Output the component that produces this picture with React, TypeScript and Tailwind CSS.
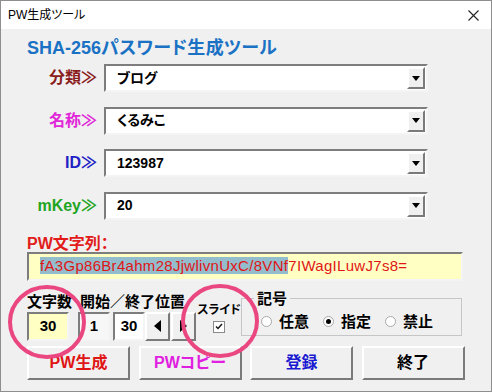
const jp = "font-['Liberation_Sans','Noto_Sans_CJK_JP',sans-serif] [font-feature-settings:'palt']"

const sunken = 'border-2 border-t-[#7d7d7d] border-l-[#7d7d7d] border-b-[#f4f4f4] border-r-[#f4f4f4]'
const raised = 'border-2 border-t-white border-l-white border-b-[#7a7a7a] border-r-[#7a7a7a] bg-[#f0f0f0]'

const rows = [
  { label: '分類≫', color: 'text-[#8a1c1c]', value: 'ブログ' },
  { label: '名称≫', color: 'text-[#e028d8]', value: 'くるみこ' },
  { label: 'ID≫', color: 'text-[#2222c4]', value: '123987' },
  { label: 'mKey≫', color: 'text-[#1fa51f]', value: '20' },
]

function Combo({ value }: { value: string }) {
  return (
    <div className={`flex h-[28px] w-[324px] items-center bg-white ${sunken}`}>
      <span className="flex-1 pl-[11px] text-[14px] font-bold text-black">{value}</span>
      <div className={`mr-[1px] flex h-[22px] w-[18px] items-center justify-center ${raised}`}>
        <svg width="8" height="5" viewBox="0 0 8 5"><path d="M0 0h8L4 5z" fill="#000" /></svg>
      </div>
    </div>
  )
}

function Radio({ label, on }: { label: string; on?: boolean }) {
  return (
    <div className="flex items-center">
      <div className="flex h-[11px] w-[11px] items-center justify-center rounded-full border border-[#a8a8a8] bg-white">
        {on && <div className="h-[5px] w-[5px] rounded-full bg-black" />}
      </div>
      <span className="ml-[7px] text-[15px] font-bold leading-[18px] text-black">{label}</span>
    </div>
  )
}

export default function App() {
  return (
    <div className={`relative flex h-[392px] w-[492px] flex-col border border-[#8e8e8e] bg-[#f0f0f0] ${jp}`}>
      <div className="flex h-[28px] items-center justify-between bg-white pl-[7px] pr-[12px]">
        <span className="text-[12px] text-black">PW生成ツール</span>
        <svg width="11" height="11" viewBox="0 0 11 11"><path d="M0.5 0.5l10 10M10.5 0.5l-10 10" stroke="#222" strokeWidth="1.1" /></svg>
      </div>

      <div className="flex flex-col pl-[26px]">
        <h1 className="mt-[9px] text-[18px] font-bold leading-[20px] text-[#1b72c4]">
          SHA-256<span className="tracking-[0.3px]">パスワード生成ツール</span>
        </h1>

        <div className="mt-[6px] flex flex-col gap-[14.5px]">
          {rows.map((r) => (
            <div key={r.label} className="flex items-center">
              <span className={`mr-[7px] w-[70px] text-right text-[16px] font-bold ${r.color}`}>{r.label}</span>
              <Combo value={r.value} />
            </div>
          ))}
        </div>

        <p className="mt-[14px] text-[16px] font-bold leading-[20px] text-[#e21b1b]">PW文字列：</p>
        <div className={`mt-[-2px] flex h-[29px] w-[436px] items-center bg-[#ffffc4] pl-[11px] ${sunken}`}>
          <span className="font-['Liberation_Sans',sans-serif] text-[15px] tracking-[0.3px] text-[#e01515]">
            <span className="bg-[#93bccd]">fA3Gp86Br4ahm28JjwlivnUxC/8VNf</span>7IWagILuwJ7s8=
          </span>
        </div>

        <div className="mt-[10px] flex h-[52px]">
          <div className="flex w-[42px] flex-col">
            <span className="h-[21px] whitespace-nowrap text-[15px] font-bold leading-[21px] text-black">文字数</span>
            <div className={`flex h-[29px] items-center justify-center bg-[#ffffc4] ${sunken}`}>
              <span className="font-['Liberation_Sans',sans-serif] text-[15px] font-bold">30</span>
            </div>
          </div>

          <div className="ml-[9px] flex flex-col">
            <span className="h-[21px] whitespace-nowrap pl-[2px] text-[15px] font-bold leading-[21px] text-black">開始／終了位置</span>
            <div className="flex h-[29px]">
              <div className={`flex w-[32px] items-center justify-center bg-[#f7f7f7] ${sunken}`}>
                <span className="font-['Liberation_Sans',sans-serif] text-[15px] font-bold">1</span>
              </div>
              <div className={`ml-[3px] flex w-[32px] items-center justify-center bg-white ${sunken}`}>
                <span className="font-['Liberation_Sans',sans-serif] text-[15px] font-bold">30</span>
              </div>
              <div className={`flex w-[25px] items-center justify-center ${raised}`}>
                <svg width="7" height="12" viewBox="0 0 7 12"><path d="M7 0v12L0 6z" fill="#000" /></svg>
              </div>
              <div className={`ml-[1px] flex w-[25px] items-center justify-center ${raised}`}>
                <svg width="7" height="12" viewBox="0 0 7 12"><path d="M0 0v12L7 6z" fill="#000" /></svg>
              </div>
            </div>
          </div>

          <div className="ml-[3px] flex w-[40px] flex-col items-center">
            <span className="mt-[11px] whitespace-nowrap text-[12px] font-bold leading-[16px] text-black">スライド</span>
            <div className="mt-[3px] flex h-[12px] w-[12px] items-center justify-center border border-[#8a8a8a] bg-white">
              <svg width="8" height="7" viewBox="0 0 8 7"><path d="M1 3.5l2 2L7 1" stroke="#111" strokeWidth="1.4" fill="none" /></svg>
            </div>
          </div>

          <fieldset className="ml-[2px] h-[45px] w-[221px] border border-[#c6c6c6]">
            <legend className="ml-[12px] px-[3px] text-[15px] font-bold leading-[16px] text-black">記号</legend>
            <div className="mt-[6px] flex gap-[14px] pl-[19px]">
              <Radio label="任意" />
              <Radio label="指定" on />
              <Radio label="禁止" />
            </div>
          </fieldset>
        </div>

        <div className="mt-[3px] flex gap-[8.5px]">
          {[
            { t: 'PW生成', c: 'text-[#e01515]' },
            { t: 'PWコピー', c: 'text-[#e020e0]' },
            { t: '登録', c: 'text-[#1a1ad0]' },
            { t: '終了', c: 'text-black' },
          ].map((b) => (
            <div key={b.t} className={`flex h-[34px] w-[103px] items-center justify-center ${raised}`}>
              <span className={`text-[16px] font-bold ${b.c}`}>{b.t}</span>
            </div>
          ))}
        </div>
      </div>

      <svg className="pointer-events-none absolute left-0 top-0" width="492" height="392">
        <ellipse cx="46" cy="321" rx="37" ry="35" fill="none" stroke="#ea4680" strokeWidth="4" />
        <ellipse cx="219" cy="320" rx="37" ry="35" fill="none" stroke="#ea4680" strokeWidth="4" />
      </svg>
    </div>
  )
}
